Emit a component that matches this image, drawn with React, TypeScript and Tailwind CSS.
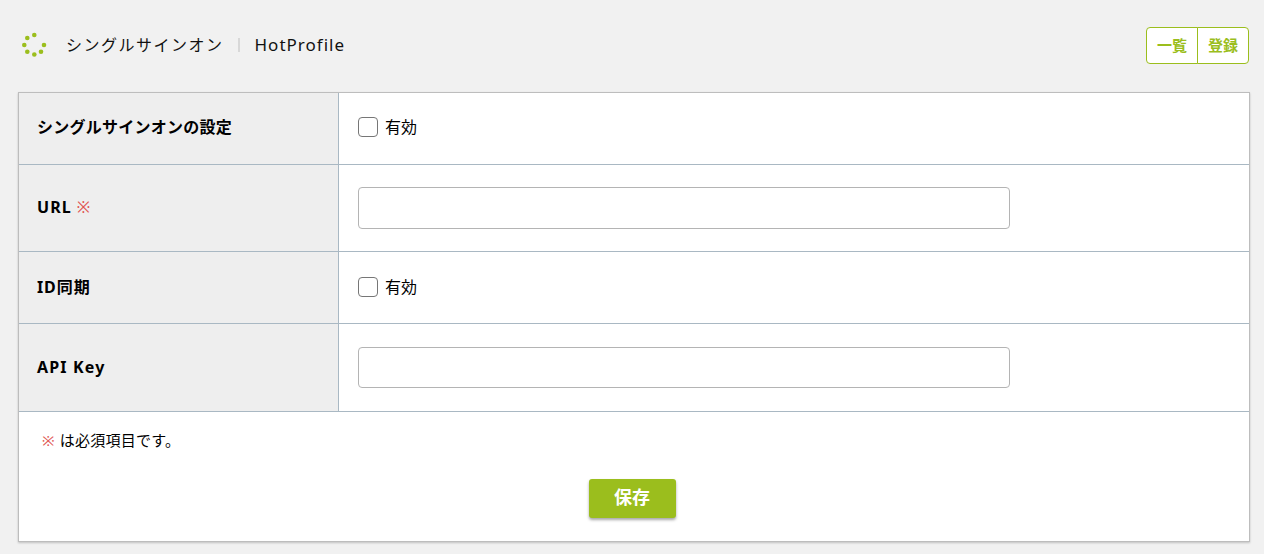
const fontStack = { fontFamily: '"Noto Sans", "Noto Sans CJK JP", sans-serif' };

function Logo() {
  const dots = [
    [34.3, 35, 2.3],
    [27.3, 38, 2.3],
    [24.3, 45, 2.3],
    [27.3, 51.7, 2.3],
    [34.3, 54.5, 2.3],
    [41, 51.7, 2.3],
    [44, 45, 2.3],
  ];
  return (
    <svg width="28" height="28" viewBox="20 31 28 28" className="shrink-0">
      {dots.map(([cx, cy, r]) => (
        <circle key={`${cx}-${cy}`} cx={cx} cy={cy} r={r} fill="#9bbe1d" />
      ))}
    </svg>
  );
}

interface RowProps {
  label: string;
  required?: boolean;
  height: string;
  labelClass: string;
  children: React.ReactNode;
}

function Row({ label, required, height, labelClass, children }: RowProps) {
  return (
    <div className={`flex border-b border-[#a9b8c3] ${height}`}>
      <div className={`w-[320px] shrink-0 flex items-center pl-[18px] bg-[#eeeeee] border-r border-[#a9b8c3] font-bold text-[16px] text-black ${labelClass}`}>
        {label}
        {required && <span className="ml-[5px] font-normal tracking-normal text-[#e0534f]">※</span>}
      </div>
      <div className="flex-1 flex items-center pl-[19px]">{children}</div>
    </div>
  );
}

function CheckField({ offset }: { offset: string }) {
  return (
    <label className={`flex items-center gap-[7px] text-[16px] text-black ${offset}`}>
      <span className="size-5 rounded-[4px] border border-[#767676] bg-white" />
      <span>有効</span>
    </label>
  );
}

function TextField({ height }: { height: string }) {
  return <input type="text" className={`w-[652px] ${height} rounded-[4px] border border-[#b4b4b4] bg-white`} />;
}

export default function App() {
  return (
    <div className="w-[1264px] h-[554px] overflow-hidden bg-[#f1f1f1] pl-[18px] pr-[14px]" style={fontStack}>
      <header className="h-[92px] flex items-center justify-between pb-[2px] pr-px">
        <div className="flex items-center pl-[2px]">
          <Logo />
          <span className="ml-[18px] text-[16px] tracking-[1.5px] text-[#111111]">シングルサインオン</span>
          <span className="ml-[14px] w-[2px] h-[14px] bg-[#d8d8d8]" />
          <span className="ml-[15px] text-[17px] tracking-[1px] text-[#111111]">HotProfile</span>
        </div>
        <div className="flex font-bold text-[15px] text-[#9bbe1d]">
          <button className="w-[52px] h-[37px] rounded-l-[4px] border border-[#9bbe1d] bg-white">一覧</button>
          <button className="w-[52px] h-[37px] -ml-px rounded-r-[4px] border border-[#9bbe1d] bg-white">登録</button>
        </div>
      </header>

      <main className="w-[1232px] h-[450px] bg-white border border-[#bdbdbd] shadow-[0_1px_2px_rgba(0,0,0,0.2)]">
        <Row label="シングルサインオンの設定" height="h-[72px]" labelClass="pb-[3px] tracking-[0.25px]">
          <CheckField offset="pb-[3px]" />
        </Row>
        <Row label="URL" required height="h-[87px]" labelClass="pb-[2px] tracking-[1.1px]">
          <TextField height="h-[42px]" />
        </Row>
        <Row label="ID同期" height="h-[72px]" labelClass="pb-[2px] tracking-[0.9px]">
          <CheckField offset="pb-[2px]" />
        </Row>
        <Row label="API Key" height="h-[88px]" labelClass="pb-[2px] tracking-[1.15px]">
          <TextField height="h-[41px]" />
        </Row>
        <div className="pl-[23px] pt-[18px] text-[15px] leading-[20px] tracking-[0.25px] text-black">
          <span className="text-[#e0534f]">※</span>
          <span className="ml-[5px]">は必須項目です。</span>
        </div>
        <div className="flex justify-center mt-[29px] pr-[4px]">
          <button className="w-[87px] h-[39px] pb-[2px] rounded-[3px] bg-[#9bbe1d] text-white font-bold text-[18px] shadow-[0_2px_3px_rgba(0,0,0,0.35)]">
            保存
          </button>
        </div>
      </main>
    </div>
  );
}
